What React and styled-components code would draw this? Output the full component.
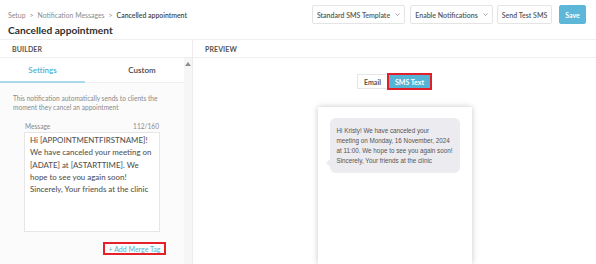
import React from "react";
import styled, { createGlobalStyle } from "styled-components";

const GlobalStyle = createGlobalStyle`
  html, body {
    margin: 0;
    padding: 0;
    background: #fff;
  }
  body {
    font-family: "Lato", "Open Sans", sans-serif;
    color: #333;
  }
  * {
    box-sizing: border-box;
  }
`;

const Page = styled.div`
  width: 596px;
  height: 264px;
  overflow: hidden;
  display: flex;
  flex-direction: column;
  background: #fff;
`;

const TopBar = styled.header`
  height: 40px;
  flex-shrink: 0;
  display: flex;
  justify-content: space-between;
  align-items: flex-start;
  padding: 0 10px 0 8px;
  border-bottom: 1px solid #efefef;
`;

const TitleBlock = styled.div`
  display: flex;
  flex-direction: column;
  gap: 3px;
  padding-top: 10px;
`;

const Crumbs = styled.div`
  font-size: 6.9px;
  line-height: 10px;
  color: #8c8c8c;
  span {
    margin: 0 4px;
  }
  b {
    color: #444;
    font-weight: 600;
  }
`;

const Title = styled.h1`
  margin: 0;
  font-size: 10.2px;
  line-height: 14px;
  font-weight: 700;
  color: #2e2e2e;
`;

const Actions = styled.div`
  display: flex;
  align-items: center;
  padding-top: 5px;
  gap: 5px;
`;

const Button = styled.button`
  height: 19px;
  width: ${(p) => p.$w}px;
  margin-left: ${(p) => p.$ml || 0}px;
  display: flex;
  align-items: center;
  justify-content: center;
  gap: 5px;
  padding: 0;
  font-family: inherit;
  font-size: 7px;
  font-weight: ${(p) => (p.$strong ? 700 : 600)};
  color: ${(p) => (p.$primary ? "#fff" : "#555")};
  background: ${(p) => (p.$primary ? "#5cb7d8" : "#fff")};
  border: 1px solid ${(p) => (p.$primary ? "#5cb7d8" : "#e4e4e4")};
  border-radius: 2px;
`;

const Chevron = () => (
  <svg width="5" height="3" viewBox="0 0 5 3" fill="none">
    <path d="M0.4 0.4 L2.5 2.5 L4.6 0.4" stroke="#888" strokeWidth="0.7" />
  </svg>
);

const Columns = styled.div`
  flex: 1;
  display: flex;
  min-height: 0;
`;

const Builder = styled.section`
  width: 193px;
  flex-shrink: 0;
  display: flex;
  flex-direction: column;
  border-right: 1px solid #ececec;
`;

const Preview = styled.section`
  flex: 1;
  display: flex;
  flex-direction: column;
`;

const SectionHead = styled.div`
  height: 18px;
  flex-shrink: 0;
  display: flex;
  align-items: center;
  padding-left: ${(p) => p.$pad}px;
  border-bottom: 1px solid #efefef;
  font-size: 7px;
  font-weight: 700;
  letter-spacing: 0.1px;
  color: #555;
  text-transform: uppercase;
`;

const BuilderBody = styled.div`
  flex: 1;
  display: flex;
  min-height: 0;
`;

const Settings = styled.div`
  width: 184px;
  display: flex;
  flex-direction: column;
  background: #fbfbfb;
`;

const Scrollbar = styled.div`
  width: 8px;
  background: #f6f6f6;
  display: flex;
  justify-content: center;
  padding-top: 4px;
`;

const ArrowUp = styled.div`
  width: 0;
  height: 0;
  border-left: 3px solid transparent;
  border-right: 3px solid transparent;
  border-bottom: 4px solid #8d8d8d;
`;

const Tabs = styled.div`
  height: 25px;
  display: flex;
  background: #fff;
  border-bottom: 1px solid #f0f0f0;
`;

const Tab = styled.div`
  width: ${(p) => (p.$w ? `${p.$w}px` : "auto")};
  flex: ${(p) => (p.$w ? "none" : 1)};
  display: flex;
  align-items: center;
  justify-content: center;
  padding-left: ${(p) => p.$pl || 0}px;
  font-size: 8px;
  font-weight: 600;
  color: ${(p) => (p.$active ? "#4fb0d4" : "#444")};
  border-bottom: 2px solid ${(p) => (p.$active ? "#a9d9ea" : "transparent")};
  margin-bottom: -1px;
`;

const Description = styled.p`
  margin: 11px 0 0 13px;
  width: 160px;
  font-size: 6.6px;
  line-height: 9px;
  color: #8a8a8a;
`;

const Field = styled.div`
  margin: 10px 0 0 24px;
  width: 136px;
`;

const FieldLabel = styled.div`
  display: flex;
  justify-content: space-between;
  padding: 0 1px;
  font-size: 6.6px;
  line-height: 8px;
  color: #8a8a8a;
  margin-bottom: 2px;
`;

const MessageBox = styled.div`
  height: 100px;
  background: #fff;
  border: 1px solid #e6e6e6;
  padding: 1px 5px;
  font-size: 7.9px;
  line-height: 12.3px;
  color: #555;
  font-weight: 500;
  white-space: pre;
  overflow: hidden;
`;

const MergeRow = styled.div`
  display: flex;
  justify-content: flex-end;
  padding-right: 18px;
  margin-top: 10px;
`;

const MergeTag = styled.span`
  height: 13px;
  width: 63px;
  display: flex;
  align-items: center;
  justify-content: center;
  font-size: 7px;
  color: #5ab4d6;
  border: 2px solid #e5202a;
`;

const PreviewBody = styled.div`
  flex: 1;
  display: flex;
  flex-direction: column;
  align-items: center;
  padding-top: 15px;
  min-height: 0;
`;

const Toggle = styled.div`
  display: flex;
  align-items: center;
`;

const ToggleBtn = styled.div`
  height: ${(p) => (p.$active ? 17 : 15)}px;
  width: ${(p) => p.$w}px;
  display: flex;
  align-items: center;
  justify-content: center;
  font-size: 7px;
  font-weight: 700;
  color: ${(p) => (p.$active ? "#fff" : "#555")};
  background: ${(p) => (p.$active ? "#55b3d5" : "#fff")};
  border: ${(p) => (p.$active ? "2px solid #e3202a" : "1px solid #e6e6e6")};
  border-right: ${(p) => (p.$active ? "2px solid #e3202a" : "none")};
`;

const Phone = styled.div`
  margin-top: 17px;
  width: 154px;
  flex: 1;
  background: #fff;
  box-shadow: 0 0 6px rgba(0, 0, 0, 0.22);
  padding: 11px 12px 0;
`;

const Bubble = styled.div`
  position: relative;
  width: 130px;
  background: #ebebf0;
  border-radius: 6px;
  padding: 8px 5px 7px 7px;
  font-family: "Liberation Sans", Arial, sans-serif;
  font-size: 6.3px;
  line-height: 10px;
  color: #555;
  white-space: pre;

  &::before {
    content: "";
    position: absolute;
    left: -4px;
    bottom: 6px;
    border-top: 4px solid transparent;
    border-bottom: 4px solid transparent;
    border-right: 4px solid #ebebf0;
  }
`;

const message = `Hi [APPOINTMENTFIRSTNAME]!
We have canceled your meeting on
[ADATE] at [ASTARTTIME]. We
hope to see you again soon!
Sincerely, Your friends at the clinic`;

const sms = `Hi Kristy! We have canceled your
meeting on Monday, 16 November, 2024
at 11:00. We hope to see you again soon!
Sincerely, Your friends at the clinic`;

const App = () => {
  return (
    <Page>
      <GlobalStyle />
      <TopBar>
        <TitleBlock>
          <Crumbs>
            Setup<span>&gt;</span>Notification Messages<span>&gt;</span>
            <b>Cancelled appointment</b>
          </Crumbs>
          <Title>Cancelled appointment</Title>
        </TitleBlock>
        <Actions>
          <Button $w={93}>
            Standard SMS Template <Chevron />
          </Button>
          <Button $w={83}>
            Enable Notifications <Chevron />
          </Button>
          <Button $w={55} $ml={-1}>
            Send Test SMS
          </Button>
          <Button $w={27} $ml={2} $primary $strong>
            Save
          </Button>
        </Actions>
      </TopBar>

      <Columns>
        <Builder>
          <SectionHead $pad={12}>Builder</SectionHead>
          <BuilderBody>
            <Settings>
              <Tabs>
                <Tab $w={85} $active>
                  Settings
                </Tab>
                <Tab $pl={15}>Custom</Tab>
              </Tabs>
              <Description>
                This notification automatically sends to clients the moment
                they cancel an appointment
              </Description>
              <Field>
                <FieldLabel>
                  <span>Message</span>
                  <span>112/160</span>
                </FieldLabel>
                <MessageBox>{message}</MessageBox>
              </Field>
              <MergeRow>
                <MergeTag>+ Add Merge Tag</MergeTag>
              </MergeRow>
            </Settings>
            <Scrollbar>
              <ArrowUp />
            </Scrollbar>
          </BuilderBody>
        </Builder>

        <Preview>
          <SectionHead $pad={12}>Preview</SectionHead>
          <PreviewBody>
            <Toggle>
              <ToggleBtn $w={30}>Email</ToggleBtn>
              <ToggleBtn $w={45} $active>
                SMS Text
              </ToggleBtn>
            </Toggle>
            <Phone>
              <Bubble>{sms}</Bubble>
            </Phone>
          </PreviewBody>
        </Preview>
      </Columns>
    </Page>
  );
};

export default App;
